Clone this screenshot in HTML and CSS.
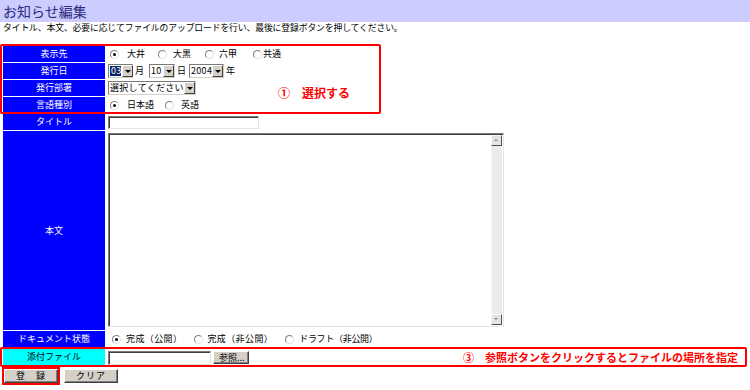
FILE: index.html
```html
<!DOCTYPE html>
<html lang="ja">
<head>
<meta charset="utf-8">
<title>お知らせ編集</title>
<link rel="stylesheet" href="styles.css">
</head>
<body>
<h1 class="title">お知らせ編集</h1>
<p class="lead">タイトル、本文、必要に応じてファイルのアップロードを行い、最後に登録ボタンを押してください。</p>

<div class="form-wrap">
  <table class="form">
    <tr>
      <th>表示先</th>
      <td><div class="cell">
        <span class="opt o1"><span class="radio on"></span><span class="lbl">大井</span></span>
        <span class="opt o2"><span class="radio"></span><span class="lbl">大黒</span></span>
        <span class="opt o3"><span class="radio"></span><span class="lbl">六甲</span></span>
        <span class="opt o4"><span class="radio"></span><span class="lbl">共通</span></span>
      </div></td>
    </tr>
    <tr>
      <th>発行日</th>
      <td><div class="cell">
        <span class="sel w-m"><span class="val hl">03</span><span class="arrow"></span></span><span class="unit">月</span>
        <span class="sel w-d"><span class="val">10</span><span class="arrow"></span></span><span class="unit">日</span>
        <span class="sel w-y"><span class="val">2004</span><span class="arrow"></span></span><span class="unit">年</span>
      </div></td>
    </tr>
    <tr>
      <th>発行部署</th>
      <td><div class="cell"><span class="sel w-dept"><span class="val">選択してください</span><span class="arrow"></span></span></div></td>
    </tr>
    <tr>
      <th>言語種別</th>
      <td><div class="cell">
        <span class="opt l1"><span class="radio on"></span><span class="lbl">日本語</span></span>
        <span class="opt l2"><span class="radio"></span><span class="lbl">英語</span></span>
      </div></td>
    </tr>
    <tr>
      <th>タイトル</th>
      <td><div class="cell"><span class="input w-title"></span></div></td>
    </tr>
    <tr class="body-row">
      <th>本文</th>
      <td>
        <div class="textarea">
          <div class="scroll">
            <span class="sbtn up"></span>
            <span class="track"></span>
            <span class="sbtn down"></span>
          </div>
        </div>
      </td>
    </tr>
    <tr>
      <th>ドキュメント状態</th>
      <td><div class="cell">
        <span class="opt doc d1"><span class="radio on"></span><span class="lbl">完成（公開）</span></span>
        <span class="opt doc d2"><span class="radio"></span><span class="lbl">完成（非公開）</span></span>
        <span class="opt doc d3"><span class="radio"></span><span class="lbl">ドラフト（非公開）</span></span>
      </div></td>
    </tr>
    <tr class="file-row">
      <th class="cyan">添付ファイル</th>
      <td><div class="cell"><span class="input w-file"></span><span class="btn browse">参照...</span></div></td>
    </tr>
  </table>

  <div class="note note-select"><span class="note-text">①　選択する</span></div>
  <div class="note note-file"><span class="note-text small">③　参照ボタンをクリックするとファイルの場所を指定</span></div>
</div>

<div class="actions">
  <span class="btn-wrap marked"><span class="btn action">登　録</span></span>
  <span class="btn-wrap"><span class="btn action">クリア</span></span>
</div>
</body>
</html>
```

FILE: styles.css
```css
* { box-sizing: border-box; }

body {
  margin: 0;
  font-family: "Noto Sans CJK JP", "Liberation Sans", sans-serif;
  font-size: 9px;
  color: #000;
  background: #fff;
  text-spacing-trim: space-all;
}

.title {
  margin: 0;
  height: 22px;
  line-height: 22px;
  padding-left: 3px;
  background: #ccccff;
  color: #2b2b80;
  font-size: 14px;
  font-weight: normal;
}

.lead {
  margin: 0;
  padding-left: 3px;
  height: 11px;
  line-height: 11px;
  font-size: 8.8px;
  letter-spacing: -0.1px;
}

.form-wrap {
  position: relative;
  margin-top: 12px;
  padding-left: 2px;
}

.form {
  border-collapse: separate;
  border-spacing: 1px;
  width: 745px;
}

.form th {
  width: 102px;
  height: 16px;
  padding: 0;
  background: #0000ff;
  color: #fff;
  font-weight: normal;
  font-size: 9px;
  text-align: center;
  vertical-align: middle;
  line-height: 16px;
}

.form th.cyan {
  background: #00ffff;
  color: #000;
}

.form td {
  padding: 0 0 0 1px;
  height: 16px;
  vertical-align: middle;
  line-height: 16px;
  white-space: nowrap;
}

.cell {
  display: flex;
  align-items: center;
  height: 16px;
}

.body-row th,
.body-row td { height: 199px; }
.body-row td { vertical-align: top; }

.file-row th,
.file-row td { height: 18px; }
.file-row .cell { height: 18px; }

/* radio options */
.opt {
  display: inline-flex;
  align-items: center;
}
.o1 { margin-left: 3px; }
.o1 .radio { margin-right: 8px; }
.o2 { margin-left: 13px; }
.o2 .radio { margin-right: 6px; }
.o3 { margin-left: 14px; }
.o3 .radio { margin-right: 5px; }
.o4 { margin-left: 16px; }
.o4 .radio { margin-right: 1px; }

.l1 { margin-left: 3px; }
.l1 .radio { margin-right: 8px; }
.l2 { margin-left: 11px; }
.l2 .radio { margin-right: 7px; }

.doc .lbl { letter-spacing: 0.4px; }
.d1 { margin-left: 5px; }
.d1 .radio { margin-right: 5px; }
.d2 { margin-left: 12px; }
.d2 .radio { margin-right: 4px; }
.d3 { margin-left: 12px; }
.d3 .radio { margin-right: 5px; }
.d3 .lbl { letter-spacing: -0.3px; }

.radio {
  display: inline-block;
  width: 9px;
  height: 9px;
  border-radius: 50%;
  border: 1px solid #808080;
  border-right-color: #e0e0e0;
  border-bottom-color: #e0e0e0;
  background: #fff;
  position: relative;
}
.radio.on::after {
  content: "";
  position: absolute;
  left: 2px;
  top: 2px;
  width: 3px;
  height: 3px;
  border-radius: 50%;
  background: #000;
}

/* selects */
.sel {
  display: inline-flex;
  align-items: stretch;
  height: 14px;
  border: 1px solid #7a7a7a;
  border-right-color: #d4d0c8;
  border-bottom-color: #d4d0c8;
  background: #fff;
  line-height: 12px;
}
.sel .val {
  flex: 1;
  padding-left: 1px;
  font-size: 9px;
  letter-spacing: 0.3px;
}
.sel .val.hl {
  background: #0a246a;
  color: #fff;
  margin: 1px;
  line-height: 10px;
  flex: 0 0 auto;
  width: 11px;
  padding-left: 1px;
}
.sel .arrow {
  width: 11px;
  flex: 0 0 11px;
  background: #d4d0c8;
  border: 1px solid #fff;
  border-right-color: #404040;
  border-bottom-color: #404040;
  position: relative;
}
.sel .arrow::after {
  content: "";
  position: absolute;
  left: 2px;
  top: 4px;
  border-left: 3px solid transparent;
  border-right: 3px solid transparent;
  border-top: 3px solid #000;
}
.w-m { width: 25px; margin-left: 1px; }
.w-m .val.hl + .arrow { margin-left: auto; }
.w-d { width: 26px; margin-left: 5px; }
.w-y { width: 35px; margin-left: 3px; }
.w-dept { width: 88px; margin-left: 1px; }
.unit { margin-left: 2px; }

/* inputs */
.input {
  display: inline-block;
  height: 13px;
  border: 1px solid #7a7a7a;
  border-right-color: #e4e4e4;
  border-bottom-color: #e4e4e4;
  box-shadow: inset 1px 1px 0 #404040;
  background: #fff;
  margin-left: 1px;
}
.w-title { width: 151px; }
.w-file { width: 103px; height: 14px; margin-top: 1px; }

.textarea {
  width: 396px;
  height: 194px;
  margin: 2px 0 0 1px;
  border: 1px solid #7a7a7a;
  border-right-color: #e4e4e4;
  border-bottom-color: #e4e4e4;
  box-shadow: inset 1px 1px 0 #404040;
  background: #fff;
  display: flex;
  justify-content: flex-end;
  padding: 1px 1px 1px 0;
}
.scroll {
  width: 11px;
  display: flex;
  flex-direction: column;
  background: #ecebe8;
}
.track {
  flex: 1;
  background: #ecebe8;
  border-left: 1px solid #f5f5f3;
}
.sbtn {
  height: 11px;
  background: #e4e3e0;
  border: 1px solid #f8f8f8;
  border-right-color: #505050;
  border-bottom-color: #505050;
  position: relative;
}
.sbtn::after {
  content: "";
  position: absolute;
  left: 2px;
  top: 3px;
  border-left: 2px solid transparent;
  border-right: 2px solid transparent;
}
.sbtn.up::after { border-bottom: 2px solid #888; }
.sbtn.down::after { border-top: 2px solid #888; }

/* buttons */
.btn {
  display: inline-block;
  background: #d4d0c8;
  border: 1px solid #fff;
  border-right-color: #404040;
  border-bottom-color: #404040;
  box-shadow: inset -1px -1px 0 #808080;
  text-align: center;
  font-size: 9px;
}
.browse {
  width: 36px;
  height: 13px;
  line-height: 11px;
  margin-left: 2px;
  margin-top: 1px;
  text-align: left;
  padding-left: 5px;
}

.actions {
  display: flex;
  gap: 2px;
  padding: 0 0 0 2px;
}
.btn-wrap {
  display: inline-flex;
  padding: 1px;
  border: 1px solid transparent;
}
.btn-wrap.marked {
  border: 2px solid #ff0000;
  padding: 0;
}
.action {
  height: 14px;
  line-height: 12px;
  letter-spacing: 1px;
}
.btn-wrap .action { width: 54px; }

/* red annotation boxes (overlays) */
.note {
  position: absolute;
  border: 2px solid #ff0000;
  border-radius: 2px;
  display: flex;
  align-items: center;
  pointer-events: none;
}
.note-text {
  color: #ff0000;
  font-size: 12px;
  font-weight: bold;
  white-space: nowrap;
}
.note-text.small { font-size: 11px; }
.note-select {
  left: 0;
  top: -1px;
  width: 381px;
  height: 70px;
  padding: 26px 0 0 276px;
}
.note-file {
  left: 0;
  top: 302px;
  width: 747px;
  height: 20px;
  justify-content: flex-end;
  padding-right: 7px;
}
```
